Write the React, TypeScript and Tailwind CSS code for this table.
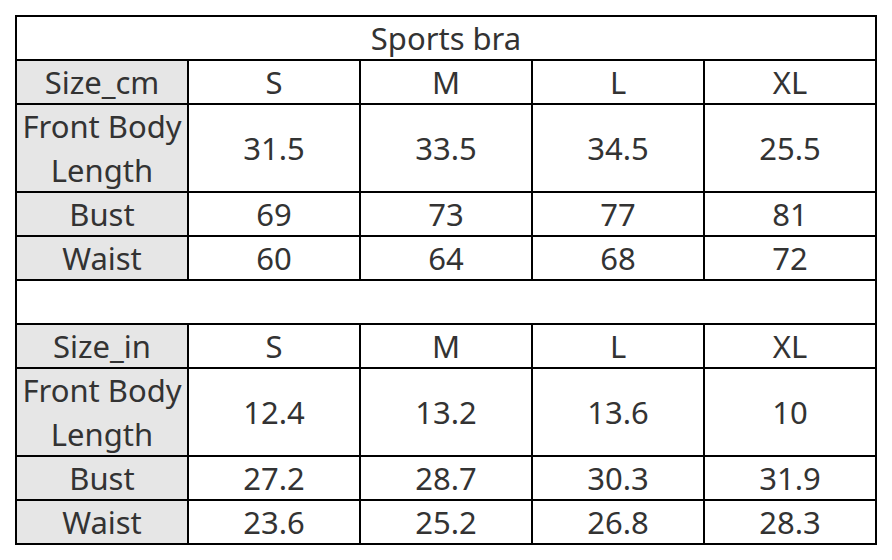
import React from 'react';

const cm = [
  ['Size_cm', 'S', 'M', 'L', 'XL'],
  ['Front Body Length', '31.5', '33.5', '34.5', '25.5'],
  ['Bust', '69', '73', '77', '81'],
  ['Waist', '60', '64', '68', '72'],
];

const inch = [
  ['Size_in', 'S', 'M', 'L', 'XL'],
  ['Front Body Length', '12.4', '13.2', '13.6', '10'],
  ['Bust', '27.2', '28.7', '30.3', '31.9'],
  ['Waist', '23.6', '25.2', '26.8', '28.3'],
];

const Rows: React.FC<{ rows: string[][] }> = ({ rows }) => (
  <>
    {rows.map((row, i) =>
      row.map((cell, j) => (
        <div
          key={`${i}-${j}`}
          className={`flex items-center justify-center text-center leading-[44px] ${
            i === 1 ? 'h-[86px]' : 'h-[42px]'
          } ${j === 0 ? 'bg-[#e6e6e6]' : 'bg-white'}`}
        >
          {cell === 'Front Body Length' ? (
            <span>
              Front Body
              <br />
              Length
            </span>
          ) : (
            cell
          )}
        </div>
      ))
    )}
  </>
);

export default function App() {
  return (
    <div className="w-[892px] h-[560px] bg-white pt-[15px] pl-[15px]">
      <div
        className="grid w-[862px] grid-cols-[repeat(5,170px)] gap-[2px] bg-black p-[2px] text-[31px] text-[#333333]"
        style={{ fontFamily: '"Noto Sans", "Open Sans", sans-serif' }}
      >
        <div className="col-span-5 flex h-[42px] items-center justify-center bg-white">Sports bra</div>
        <Rows rows={cm} />
        <div className="col-span-5 h-[42px] bg-white" />
        <Rows rows={inch} />
      </div>
    </div>
  );
}
